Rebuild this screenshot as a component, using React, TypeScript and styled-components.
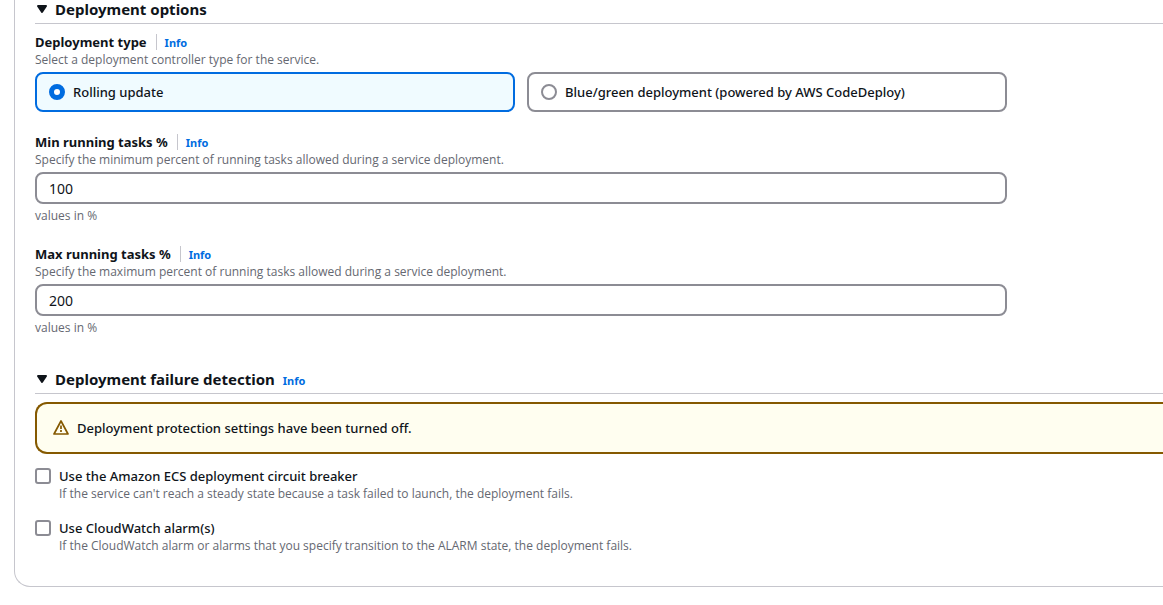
import React, { useId, useState } from "react";
import styled, { createGlobalStyle } from "styled-components";

const GlobalStyle = createGlobalStyle`
  *, *::before, *::after { box-sizing: border-box; }
  body {
    margin: 0;
    background: #ffffff;
    color: #0f141a;
    font-family: "Noto Sans", "Open Sans", sans-serif;
    font-size: 13px;
    font-weight: 500;
    line-height: 20px;
  }
`;

const Page = styled.main`
  padding: 0 0 18px 14px;
`;

const Panel = styled.div`
  display: flex;
  flex-direction: column;
  gap: 34px;
  padding: 0 0 32px 20px;
  border: 1px solid #c6c6cd;
  border-top: none;
  border-right: none;
  border-bottom-left-radius: 16px;
`;

const Section = styled.section`
  display: flex;
  flex-direction: column;
  gap: 8px;
`;

const SectionHeader = styled.header`
  display: flex;
  align-items: baseline;
  gap: 8px;
  padding-bottom: 5px;
  border-bottom: 1px solid #c6c6cd;
`;

const Heading = styled.h3`
  margin: 0;
  font-size: 15px;
  line-height: 18px;
`;

const Toggle = styled.button`
  display: flex;
  align-items: baseline;
  gap: 6px;
  padding: 0;
  border: none;
  background: none;
  color: inherit;
  font: inherit;
  font-weight: 700;
  cursor: pointer;
`;

const InfoLink = styled.a`
  color: #006ce0;
  font-size: 11px;
  font-weight: 700;
  line-height: 12px;
  text-decoration: none;
`;

const Fields = styled.div`
  display: flex;
  flex-direction: column;
  gap: 20px;
  max-width: 972px;
`;

const Field = styled.div`
  display: flex;
  flex-direction: column;
`;

const LabelRow = styled.div`
  display: flex;
  align-items: baseline;
  gap: 8px;
  height: 20px;
`;

const Label = styled.label`
  padding-right: 1px;
  font-weight: 700;
`;

const Divider = styled.span`
  align-self: center;
  width: 1px;
  height: 16px;
  background: #c6c6cd;
`;

const Hint = styled.div`
  color: #656871;
  font-family: "Open Sans", "Noto Sans", sans-serif;
  font-size: 12px;
  font-weight: 400;
  line-height: 16px;
`;

const Tiles = styled.div`
  display: grid;
  grid-template-columns: 1fr 1fr;
  gap: 12px;
  margin-top: 4px;
`;

const Tile = styled.label<{ $selected: boolean }>`
  display: flex;
  align-items: center;
  gap: 8px;
  padding: 8px 12px;
  border: 2px solid ${(p) => (p.$selected ? "#006ce0" : "#8c8c94")};
  border-radius: 8px;
  background: ${(p) => (p.$selected ? "#f0fbff" : "#ffffff")};
`;

const Radio = styled.input`
  appearance: none;
  width: 16px;
  height: 16px;
  margin: 0;
  border: 2px solid #8c8c94;
  border-radius: 50%;
  background: #ffffff;

  &:checked {
    border: 5px solid #006ce0;
  }
`;

const TextInput = styled.input`
  width: 100%;
  height: 32px;
  margin: 4px 0;
  padding: 4px 12px;
  border: 2px solid #8c8c94;
  border-radius: 8px;
  background: #ffffff;
  color: inherit;
  font: inherit;
  font-size: 14px;
  font-weight: 400;
`;

const Alert = styled.div`
  display: flex;
  align-items: center;
  gap: 8px;
  padding: 14px 16px;
  border: 2px solid #855900;
  border-right: none;
  border-radius: 12px 0 0 12px;
  background: #fffef0;
`;

const Options = styled.div`
  display: flex;
  flex-direction: column;
  gap: 16px;
  margin-top: 4px;
`;

const Option = styled.div`
  display: flex;
  align-items: flex-start;
  gap: 8px;
`;

const Checkbox = styled.input`
  appearance: none;
  width: 16px;
  height: 16px;
  margin: 2px 0;
  border: 2px solid #8c8c94;
  border-radius: 3px;
  background: #ffffff;

  &:checked {
    background: #006ce0;
    border-color: #006ce0;
  }
`;

const OptionLabel = styled.label`
  display: block;
`;

const Caret = () => (
  <svg width="14" height="12" viewBox="0 2 14 12" aria-hidden="true">
    <path
      d="M3 5h8l-4 6z"
      fill="currentColor"
      stroke="currentColor"
      strokeWidth="2"
      strokeLinejoin="round"
    />
  </svg>
);

const WarningIcon = () => (
  <svg
    width="16"
    height="16"
    viewBox="0 0 16 16"
    fill="none"
    stroke="#855900"
    strokeWidth="1.7"
    strokeLinejoin="round"
    aria-hidden="true"
  >
    <path d="M8 1l7 13H1z" />
    <path d="M8 5.5v3.5M8 10v2" />
  </svg>
);

function SectionTitle({ title, info }: { title: string; info?: boolean }) {
  return (
    <SectionHeader>
      <Heading>
        <Toggle type="button" aria-expanded="true">
          <Caret />
          {title}
        </Toggle>
      </Heading>
      {info && <InfoLink href="#info">Info</InfoLink>}
    </SectionHeader>
  );
}

function PercentField({ label, hint, initial }: { label: string; hint: string; initial: string }) {
  const id = useId();
  const [value, setValue] = useState(initial);
  return (
    <Field>
      <LabelRow>
        <Label htmlFor={id}>{label}</Label>
        <Divider />
        <InfoLink href="#info">Info</InfoLink>
      </LabelRow>
      <Hint>{hint}</Hint>
      <TextInput id={id} value={value} onChange={(e) => setValue(e.target.value)} />
      <Hint>values in %</Hint>
    </Field>
  );
}

function CheckOption({ label, hint }: { label: string; hint: string }) {
  const id = useId();
  return (
    <Option>
      <Checkbox type="checkbox" id={id} />
      <div>
        <OptionLabel htmlFor={id}>{label}</OptionLabel>
        <Hint>{hint}</Hint>
      </div>
    </Option>
  );
}

const deploymentTypes = ["Rolling update", "Blue/green deployment (powered by AWS CodeDeploy)"];

export default function App() {
  const [type, setType] = useState(deploymentTypes[0]);
  return (
    <Page>
      <GlobalStyle />
      <Panel>
        <Section>
          <SectionTitle title="Deployment options" />
          <Fields>
            <Field role="radiogroup" aria-labelledby="deployment-type">
              <LabelRow>
                <Label as="span" id="deployment-type">
                  Deployment type
                </Label>
                <Divider />
                <InfoLink href="#info">Info</InfoLink>
              </LabelRow>
              <Hint>Select a deployment controller type for the service.</Hint>
              <Tiles>
                {deploymentTypes.map((name) => (
                  <Tile key={name} $selected={type === name}>
                    <Radio
                      type="radio"
                      name="deployment-type"
                      checked={type === name}
                      onChange={() => setType(name)}
                    />
                    {name}
                  </Tile>
                ))}
              </Tiles>
            </Field>
            <PercentField
              label="Min running tasks %"
              hint="Specify the minimum percent of running tasks allowed during a service deployment."
              initial="100"
            />
            <PercentField
              label="Max running tasks %"
              hint="Specify the maximum percent of running tasks allowed during a service deployment."
              initial="200"
            />
          </Fields>
        </Section>
        <Section>
          <SectionTitle title="Deployment failure detection" info />
          <Alert role="status">
            <WarningIcon />
            Deployment protection settings have been turned off.
          </Alert>
          <Options>
            <CheckOption
              label="Use the Amazon ECS deployment circuit breaker"
              hint="If the service can't reach a steady state because a task failed to launch, the deployment fails."
            />
            <CheckOption
              label="Use CloudWatch alarm(s)"
              hint="If the CloudWatch alarm or alarms that you specify transition to the ALARM state, the deployment fails."
            />
          </Options>
        </Section>
      </Panel>
    </Page>
  );
}
